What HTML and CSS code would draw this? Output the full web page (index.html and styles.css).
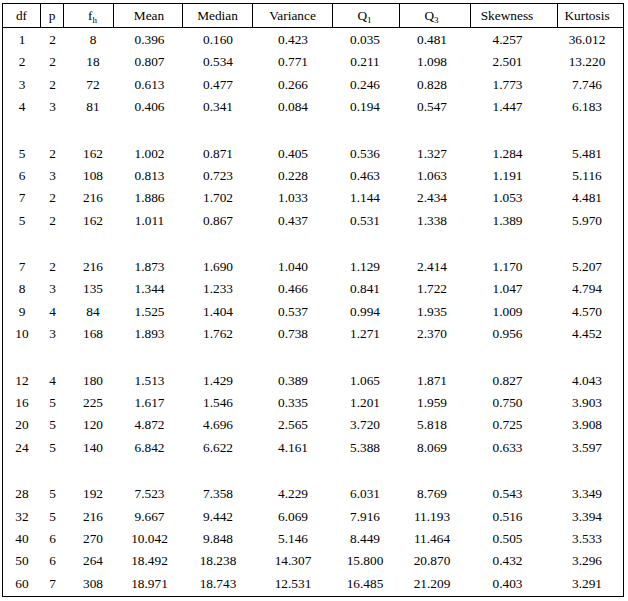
FILE: index.html
```html
<!DOCTYPE html>
<html>
<head>
<meta charset="utf-8">
<link rel="stylesheet" href="styles.css">
</head>
<body>
<table class="stats">
<thead>
<tr>
<th class="c-df">df</th>
<th class="c-p">p</th>
<th class="c-fh">f<sub>h</sub></th>
<th class="c-mean">Mean</th>
<th class="c-median">Median</th>
<th class="c-var">Variance</th>
<th class="c-q1">Q<sub>1</sub></th>
<th class="c-q3">Q<sub>3</sub></th>
<th class="c-skew">Skewness</th>
<th class="c-kurt">Kurtosis</th>
</tr>
</thead>
<tbody>
<tr class="g-start"><td>1</td><td>2</td><td>8</td><td>0.396</td><td>0.160</td><td>0.423</td><td>0.035</td><td>0.481</td><td>4.257</td><td>36.012</td></tr>
<tr><td>2</td><td>2</td><td>18</td><td>0.807</td><td>0.534</td><td>0.771</td><td>0.211</td><td>1.098</td><td>2.501</td><td>13.220</td></tr>
<tr><td>3</td><td>2</td><td>72</td><td>0.613</td><td>0.477</td><td>0.266</td><td>0.246</td><td>0.828</td><td>1.773</td><td>7.746</td></tr>
<tr class="g-end"><td>4</td><td>3</td><td>81</td><td>0.406</td><td>0.341</td><td>0.084</td><td>0.194</td><td>0.547</td><td>1.447</td><td>6.183</td></tr>

<tr class="g-start"><td>5</td><td>2</td><td>162</td><td>1.002</td><td>0.871</td><td>0.405</td><td>0.536</td><td>1.327</td><td>1.284</td><td>5.481</td></tr>
<tr><td>6</td><td>3</td><td>108</td><td>0.813</td><td>0.723</td><td>0.228</td><td>0.463</td><td>1.063</td><td>1.191</td><td>5.116</td></tr>
<tr><td>7</td><td>2</td><td>216</td><td>1.886</td><td>1.702</td><td>1.033</td><td>1.144</td><td>2.434</td><td>1.053</td><td>4.481</td></tr>
<tr class="g-end"><td>5</td><td>2</td><td>162</td><td>1.011</td><td>0.867</td><td>0.437</td><td>0.531</td><td>1.338</td><td>1.389</td><td>5.970</td></tr>

<tr class="g-start"><td>7</td><td>2</td><td>216</td><td>1.873</td><td>1.690</td><td>1.040</td><td>1.129</td><td>2.414</td><td>1.170</td><td>5.207</td></tr>
<tr><td>8</td><td>3</td><td>135</td><td>1.344</td><td>1.233</td><td>0.466</td><td>0.841</td><td>1.722</td><td>1.047</td><td>4.794</td></tr>
<tr><td>9</td><td>4</td><td>84</td><td>1.525</td><td>1.404</td><td>0.537</td><td>0.994</td><td>1.935</td><td>1.009</td><td>4.570</td></tr>
<tr class="g-end"><td>10</td><td>3</td><td>168</td><td>1.893</td><td>1.762</td><td>0.738</td><td>1.271</td><td>2.370</td><td>0.956</td><td>4.452</td></tr>

<tr class="g-start"><td>12</td><td>4</td><td>180</td><td>1.513</td><td>1.429</td><td>0.389</td><td>1.065</td><td>1.871</td><td>0.827</td><td>4.043</td></tr>
<tr><td>16</td><td>5</td><td>225</td><td>1.617</td><td>1.546</td><td>0.335</td><td>1.201</td><td>1.959</td><td>0.750</td><td>3.903</td></tr>
<tr><td>20</td><td>5</td><td>120</td><td>4.872</td><td>4.696</td><td>2.565</td><td>3.720</td><td>5.818</td><td>0.725</td><td>3.908</td></tr>
<tr class="g-end"><td>24</td><td>5</td><td>140</td><td>6.842</td><td>6.622</td><td>4.161</td><td>5.388</td><td>8.069</td><td>0.633</td><td>3.597</td></tr>

<tr class="g-start"><td>28</td><td>5</td><td>192</td><td>7.523</td><td>7.358</td><td>4.229</td><td>6.031</td><td>8.769</td><td>0.543</td><td>3.349</td></tr>
<tr><td>32</td><td>5</td><td>216</td><td>9.667</td><td>9.442</td><td>6.069</td><td>7.916</td><td>11.193</td><td>0.516</td><td>3.394</td></tr>
<tr><td>40</td><td>6</td><td>270</td><td>10.042</td><td>9.848</td><td>5.146</td><td>8.449</td><td>11.464</td><td>0.505</td><td>3.533</td></tr>
<tr><td>50</td><td>6</td><td>264</td><td>18.492</td><td>18.238</td><td>14.307</td><td>15.800</td><td>20.870</td><td>0.432</td><td>3.296</td></tr>
<tr class="g-last"><td>60</td><td>7</td><td>308</td><td>18.971</td><td>18.743</td><td>12.531</td><td>16.485</td><td>21.209</td><td>0.403</td><td>3.291</td></tr>
</tbody>
</table>
</body>
</html>
```
FILE: styles.css
```css
html, body {
  background: #fff;
}
body {
  margin: 3px 2px;
  font-family: "Liberation Serif", "Times New Roman", serif;
  font-size: 13.33px;
  color: #000;
}
.stats {
  border-collapse: separate;
  border-spacing: 0;
  table-layout: fixed;
  width: 622px;
  border: 1px solid #000;
}
.stats th,
.stats td {
  box-sizing: border-box;
  padding: 0;
  text-align: center;
  font-weight: normal;
  white-space: nowrap;
}
.stats th {
  height: 24px;
  line-height: 23px;
  border-bottom: 1px solid #000;
  border-right: 1px solid #000;
}
.stats th:last-child {
  border-right: 0;
}
.stats td {
  line-height: 22.32px;
}
.stats tr.g-start td { padding-top: 1px; }
.stats tr.g-end td { padding-bottom: 23.32px; }
.stats tr.g-last td { padding-bottom: 1px; }

.stats sub {
  font-size: 9px;
  line-height: 0;
  vertical-align: -3px;
}

.c-df { width: 38px; }
.c-p { width: 23px; }
.c-fh { width: 50px; }
.c-mean { width: 69px; }
.c-median { width: 70px; }
.c-var { width: 80px; }
.c-q1 { width: 67px; }
.c-q3 { width: 71px; }
.c-skew { width: 87px; }
.c-kurt { width: 65px; }

.stats th:nth-child(3), .stats td:nth-child(3) { padding-left: 8px; }
.stats th:nth-child(4), .stats td:nth-child(4) { padding-left: 2px; }
.stats th:nth-child(7), .stats td:nth-child(7) { padding-right: 3px; }
.stats th:nth-child(8), .stats td:nth-child(8) { padding-right: 7px; }
.stats th:nth-child(9), .stats td:nth-child(9) { padding-right: 14px; }
.stats th:nth-child(10), .stats td:nth-child(10) { padding-right: 7px; }
```
